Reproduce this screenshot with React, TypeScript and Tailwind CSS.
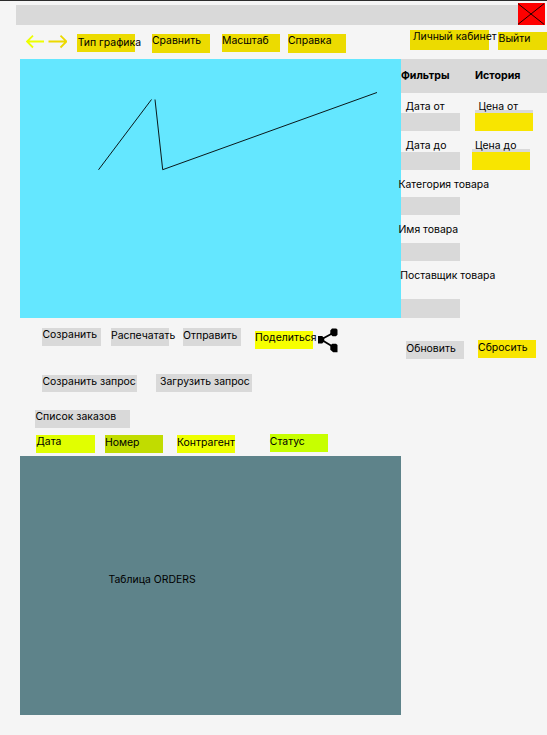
import type { ReactNode } from "react";

function Chip({ className, children }: { className: string; children?: ReactNode }) {
  return (
    <button type="button" className={`flex shrink-0 items-start justify-start whitespace-nowrap text-left leading-[13px] ${className}`}>
      {children}
    </button>
  );
}

function Label({ className, children }: { className: string; children: ReactNode }) {
  return <div className={`shrink-0 whitespace-nowrap leading-[13px] ${className}`}>{children}</div>;
}

function TitleBar() {
  return (
    <header className="flex h-6 shrink-0 items-start pl-4 pt-0.5">
      <div className="mt-[2px] ml-[0.3px] h-5 w-[501.7px] bg-[#d9d9d9]" />
      <button type="button" aria-label="Закрыть" className="h-[22px] w-[27px] bg-[#ff0000]">
        <svg viewBox="0 0 27 22" className="block h-[22px] w-[27px]" stroke="#000" strokeWidth="0.9">
          <path d="M0 0.7 26 21.3M0 21.3 26 0.7" />
        </svg>
      </button>
    </header>
  );
}

function Toolbar() {
  return (
    <nav className="flex h-[34px] shrink-0 items-start pl-[26px]">
      <svg viewBox="0 0 41 14" className="mt-[10px] h-[14px] w-[41px] shrink-0" fill="none" strokeWidth="1.8">
        <path d="M18 6.5H1M7 .7 1 6.5l6 6" stroke="#edff00" />
        <path d="M22.5 6.5H40M34.5.7l6 5.8-6 6" stroke="#ecd900" />
      </svg>
      <Chip className="ml-[10.3px] mt-[9px] h-[18px] w-[58px] bg-[#ecdb00] pl-[0.4px] pt-[2px]">Тип графика</Chip>
      <Chip className="ml-[16.7px] mt-[9.4px] h-[18.3px] w-[58px] bg-[#ecdb00]">Сравнить</Chip>
      <Chip className="ml-[12px] mt-[9px] h-[18px] w-[58.5px] bg-[#ecdb00]">Масштаб</Chip>
      <Chip className="ml-[7.5px] mt-[9.4px] h-[18.3px] w-[58.5px] bg-[#ecdb00]">Справка</Chip>
      <Chip className="ml-[63.5px] mt-[5px] h-5 w-[79px] bg-[#ecdb00] pl-[2.7px]">Личный кабинет</Chip>
      <Chip className="ml-[9.3px] mt-[7px] h-[18.3px] w-[49px] bg-[#ecdb00] pl-[0.3px]">Выйти</Chip>
    </nav>
  );
}

function Chart() {
  return (
    <svg viewBox="0 0 381 258.7" className="block h-[258.7px] w-[381px] shrink-0 bg-[#64e7ff]" fill="none" stroke="#000" strokeWidth="0.9">
      <path d="M78.5 110.8 131.5 40.5M135 40.5l7.7 70.2L357 33.5" />
    </svg>
  );
}

function Filters() {
  return (
    <aside className="relative flex w-[146px] shrink-0 flex-col">
      <div className="flex h-[34px] shrink-0 bg-[#d9d9d9] pt-[10px] text-[10.6px] font-bold">
        <Label className="w-[74px]">Фильтры</Label>
        <Label className="">История</Label>
      </div>
      <div className="flex h-[40px] shrink-0">
        <div className="w-[74px] pt-[7px]">
          <Label className="pl-[4.5px]">Дата от</Label>
          <div className="h-[18px] w-[58.5px] bg-[#d9d9d9]" />
        </div>
        <div className="pt-[7px]">
          <Label className="relative z-10 pl-[3.5px]">Цена от</Label>
          <div className="-mt-[3px] h-[3px] w-[58px] bg-[#d9d9d9]" />
          <div className="h-[18px] w-[58px] bg-[#f8e500]" />
        </div>
      </div>
      <div className="flex h-[44px] shrink-0">
        <div className="w-[70.5px] pt-[6px]">
          <Label className="pl-[4.5px]">Дата до</Label>
          <div className="h-[18px] w-[58.5px] bg-[#d9d9d9]" />
        </div>
        <div className="pt-[6px]">
          <Label className="relative z-10 pl-[3.5px]">Цена до</Label>
          <div className="-mt-[3px] h-[3px] w-[58px] bg-[#d9d9d9]" />
          <div className="h-[18px] w-[58.3px] bg-[#f8e500]" />
        </div>
      </div>
      <Label className="-ml-[2.5px] mt-[1px]">Категория товара</Label>
      <div className="mt-[6px] h-[18px] w-[58.5px] shrink-0 bg-[#d9d9d9]" />
      <Label className="-ml-[2.5px] mt-[8px]">Имя товара</Label>
      <div className="mt-[7px] h-[18.3px] w-[58.5px] shrink-0 bg-[#d9d9d9]" />
      <Label className="-ml-[0.8px] mt-[7.7px]">Поставщик товара</Label>
      <div className="mt-[17.5px] h-[18.2px] w-[58.5px] shrink-0 bg-[#d9d9d9]" />
    </aside>
  );
}

function ShareIcon() {
  return (
    <svg viewBox="0 0 20 25" className="ml-[5px] h-[25px] w-5 shrink-0" fill="#000">
      <path d="M3 11.5 16 4.5M3 11.5 17 20" stroke="#000" strokeWidth="1.8" />
      <path d="M0 8h4.2l2 2v3.5l-2 2H0z" />
      <path d="M14 .5h4.3l1.2 1.2v5.1l-1.6 1.5h-3.3l-2.3-2V2.5z" />
      <path d="M14.3 15.7h3.7l1.5 1.3v7.3h-4.3l-2.9-2.6v-4.2z" />
    </svg>
  );
}

function Actions() {
  return (
    <div className="shrink-0">
      <div className="flex h-[56px] items-start pl-[42.3px]">
        <Chip className="mt-[10.3px] h-[18.2px] w-[58.3px] bg-[#d9d9d9] pl-[0.2px]">Созранить</Chip>
        <Chip className="ml-[10.4px] mt-[10.3px] h-[18.2px] w-[58.5px] bg-[#d9d9d9] pt-[0.7px]">Распечатать</Chip>
        <Chip className="ml-[13.5px] mt-[10.3px] h-[18.2px] w-[58.3px] bg-[#d9d9d9] pt-[0.7px]">Отправить</Chip>
        <Chip className="ml-[13.8px] mt-[13.3px] h-[18px] w-[58.3px] bg-[#f7ff00]">Поделиться</Chip>
        <div className="mt-[10px]">
          <ShareIcon />
        </div>
        <Chip className="ml-[67.7px] mt-[23.3px] h-[18.2px] w-[58px] bg-[#d9d9d9] pl-[0.2px] pt-[0.7px]">Обновить</Chip>
        <Chip className="ml-[14px] mt-[22.3px] h-[18.3px] w-[58.3px] bg-[#f8e500] pt-[0.7px]">Сбросить</Chip>
      </div>
      <div className="flex h-[36px] items-start pl-[42.3px]">
        <Chip className="mt-[1.3px] h-[17.2px] w-[94.5px] bg-[#d9d9d9] pl-[0.2px]">Созранить запрос</Chip>
        <Chip className="ml-[19.2px] mt-[0.3px] h-[18.2px] w-[96px] bg-[#d9d9d9] pl-[4px] pt-[1px]">Загрузить запрос</Chip>
      </div>
      <div className="flex h-[24px] items-start pl-[35.3px]">
        <Chip className="mt-[0.5px] h-[18px] w-[94.7px] bg-[#d9d9d9] pl-[0.2px]">Список заказов</Chip>
      </div>
      <div className="flex h-[22.6px] items-start pl-[36px]">
        <Chip className="mt-[1.3px] h-[18px] w-[58.7px] bg-[#e1ff00] pl-[0.3px]">Дата</Chip>
        <Chip className="ml-[10.3px] mt-[1.3px] h-[18px] w-[58px] bg-[#c1dc00] pt-[0.8px]">Номер</Chip>
        <Chip className="ml-[14px] mt-[1.3px] h-[18px] w-[58.3px] bg-[#eeff00] pt-[0.8px]">Контрагент</Chip>
        <Chip className="ml-[34.5px] mt-[0.3px] h-[18px] w-[58.2px] bg-[#c7ff00] pt-[0.8px]">Статус</Chip>
      </div>
    </div>
  );
}

export default function App() {
  return (
    <main className="flex h-[735px] w-[547px] flex-col overflow-hidden border-t border-[#2c2c2c] bg-[#f5f5f5] font-['Inter',sans-serif] text-[10.45px] text-black">
      <TitleBar />
      <Toolbar />
      <div className="flex h-[258.7px] shrink-0">
        <div className="w-5 shrink-0" />
        <Chart />
        <Filters />
      </div>
      <Actions />
      <section className="ml-5 h-[258.4px] w-[381px] shrink-0 bg-[#5e838a] pl-[88.5px] pt-[117px]">
        <Label className="">Таблица ORDERS</Label>
      </section>
    </main>
  );
}
